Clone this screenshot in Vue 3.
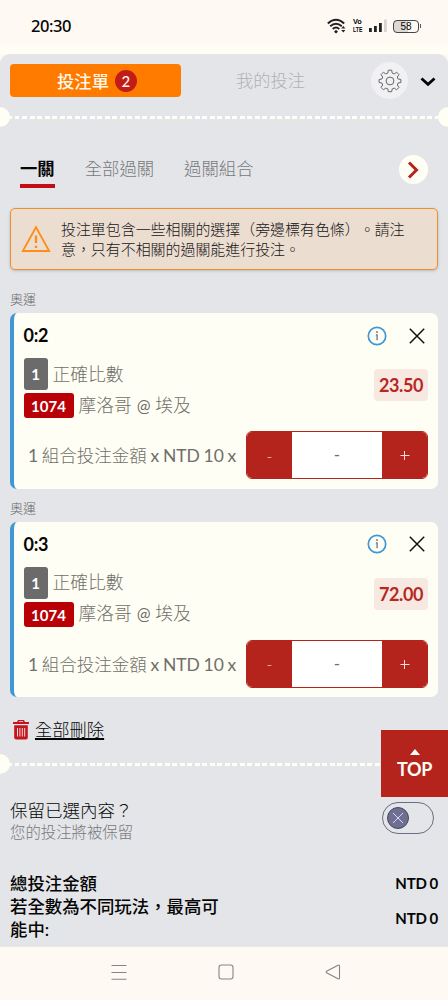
<script setup>
import { ref } from 'vue'

const bets = ref([
  { id: 1, score: '0:2', odds: '23.50' },
  { id: 2, score: '0:3', odds: '72.00' },
])
</script>

<template>
  <div class="screen" lang="zh-Hant">
    <header class="status">
      <span class="clock">20:30</span>
      <div class="status-icons">
        <svg class="wifi" width="20" height="16" viewBox="0 0 20 16" fill="none" stroke="#222" stroke-width="1.9">
          <path d="M.8 5.5Q9 -2 17.2 5.5M3.2 8.3Q9 3 14.8 8.3M5.7 11Q9 8 12.3 11" />
          <path d="M9 11.7L11 13.7 9 15.5 7 13.7ZM16.3 8L18.4 10.6H14.2ZM16.3 14.4L18.4 12H14.2Z" fill="#222" stroke="none" />
        </svg>
        <span class="volte"><b>Vo</b><b>LTE</b></span>
        <svg class="signal" width="18" height="14" viewBox="0 0 18 14">
          <path d="M0 9h2.8v4H0zM5 7h2.8v6H5zM10 4h2.8v9H10z" fill="#222" />
          <path d="M15 .5h2.8V13H15z" fill="#d8d5d0" />
        </svg>
        <span class="battery">58</span>
      </div>
    </header>

    <main class="sheet">
      <div class="top-tabs">
        <button class="slip">投注單<span class="count">2</span></button>
        <span class="mine">我的投注</span>
        <span class="gear">
          <svg width="24" height="24" viewBox="0 0 24 24" fill="none" stroke="#666" stroke-width="1" stroke-linejoin="round">
            <path d="M10.3 1.2h3.4l.5 2.9 2 .8 2.4-1.7 2.4 2.4-1.7 2.4.8 2 2.800.5v3l-2.800.5-.8 2 1.700 2.400-2.400 2.400-2.400-1.700-2 .8-.5 2.800h-3.400l-.5-2.800-2-.8-2.400 1.700L3 18.400l1.700-2.400-.8-2-2.800-.5v-3l2.800-.5.8-2L3 5.600l2.400-2.400 2.400 1.700 2-.8z" />
            <circle cx="12" cy="12" r="3.9" />
          </svg>
        </span>
        <svg class="chev" width="16" height="10" viewBox="0 0 16 10" fill="none" stroke="#050505" stroke-width="2.8"><path d="M1.5 1.500L8 7.300L14.500 1.500" /></svg>
      </div>

      <div class="tear"><i></i></div>

      <nav class="modes">
        <span class="mode active">一關</span>
        <span class="mode">全部過關</span>
        <span class="mode">過關組合</span>
        <span class="next">
          <svg width="12" height="18" viewBox="0 0 12 18" fill="none" stroke="#b5241c" stroke-width="3"><path d="M2 1.500L9.500 9L2 16.500" /></svg>
        </span>
      </nav>

      <section class="alert">
        <svg width="30" height="28" viewBox="0 0 30 28" fill="none" stroke="#ff8c16" stroke-width="1.8">
          <path d="M15 2.200L28.200 26H1.800Z" />
          <path d="M15 10.500v7.500M15 20.800v2.300" stroke-width="2.300" />
        </svg>
        <p>投注單包含一些相關的選擇（旁邊標有色條）。請注<br>意，只有不相關的過關能進行投注。</p>
      </section>

      <template v-for="bet in bets" :key="bet.id">
        <div class="league">奧運</div>
        <article class="card">
          <div class="card-head">
            <strong>{{ bet.score }}</strong>
            <svg class="info" width="20" height="20" viewBox="0 0 20 20" fill="none" stroke="#3e98d6" stroke-width="1.700">
              <circle cx="10" cy="10" r="8.700" />
              <path d="M8.900 8.800h1.200v5.500" stroke="#58779a" stroke-width="1.300" />
              <circle cx="10" cy="6" r=".9" fill="#58779a" stroke="none" />
            </svg>
            <svg class="close" width="16" height="16" viewBox="0 0 16 16" stroke="#111" stroke-width="1.500"><path d="M.8.8l14.400 14.400M15.200.8L.8 15.200" /></svg>
          </div>
          <div class="details">
            <div class="lines">
              <div class="line market"><span class="tag gray">1</span><span class="name">正確比數</span></div>
              <div class="line"><span class="tag red">1074</span><span class="name">摩洛哥 <em>@</em> 埃及</span></div>
            </div>
            <span class="odds">{{ bet.odds }}</span>
          </div>
          <div class="stake">
            <span class="stake-label">1 <span>組合投注金額</span> x NTD 10 x</span>
            <div class="stepper">
              <button>-</button>
              <span class="amount">-</span>
              <button><svg width="10" height="10" viewBox="0 0 10 10" stroke="#f7ded9" stroke-width="1"><path d="M.5 5.500h9M4.500 1v9" /></svg></button>
            </div>
          </div>
        </article>
      </template>

      <div class="remove">
        <svg width="16" height="20" viewBox="0 0 16 20">
          <path d="M5 0h6l1 2h4v2H0V2h4zM6 1.300L5.600 2h4.800L10 1.300zM1.200 5.300h13.600v12.200q0 2-2 2H3.200q-2 0-2-2z" fill="#c3151b" fill-rule="evenodd" />
          <path d="M4.500 8v8.500M6.900 8v8.500M9.300 8v8.500M11.700 8v8.500" stroke="#f2d9d8" stroke-width="1" />
        </svg>
        <a>全部刪除</a>
      </div>

      <div class="tear second"><i></i></div>

      <section class="keep">
        <div>
          <p class="keep-title">保留已選內容？</p>
          <p class="keep-note">您的投注將被保留</p>
        </div>
        <span class="toggle"><span class="knob">
          <svg width="12" height="12" viewBox="0 0 12 12" stroke="#d9d9ee" stroke-width="1"><path d="M1 1l10 10M11 1L1 11" /></svg>
        </span></span>
      </section>

      <section class="totals">
        <div class="total"><span>總投注金額</span><b>NTD 0</b></div>
        <div class="total"><span>若全數為不同玩法，最高可<br>能中:</span><b>NTD 0</b></div>
      </section>
    </main>

    <footer class="nav">
      <svg width="16" height="16" viewBox="0 0 16 16" stroke="#858585" stroke-width="1.100"><path d="M.5 1.500h15M.5 8.500h15M.5 15.200h15" /></svg>
      <svg width="16" height="16" viewBox="0 0 16 16" fill="none" stroke="#858585" stroke-width="1.100"><rect x="1" y="1" width="14" height="14" rx="2.500" /></svg>
      <svg width="16" height="16" viewBox="0 0 16 16" fill="none" stroke="#858585" stroke-width="1.100" stroke-linejoin="round"><path d="M1.500 7.200Q.8 8 1.500 8.800L13 14.800Q14.500 15.300 14.500 13.800V2.200Q14.500 .7 13 1.200Z" /></svg>
    </footer>

    <button class="top-link"><i></i>TOP</button>
  </div>
</template>

<style>
body { background: #fef9f2; }
</style>

<style scoped>
* { box-sizing: border-box; }
p { margin: 0; }
button { border: 0; padding: 0; font: inherit; letter-spacing: inherit; }
svg { display: block; flex: none; }
.screen {
  position: relative; width: 448px; height: 1000px; overflow: hidden;
  display: flex; flex-direction: column; background: #fef9f2; color: #050505;
  font-family: Lato, "Noto Sans CJK TC", sans-serif; font-weight: 300;
  text-spacing-trim: space-all;
}
.status { height: 54px; flex: none; display: flex; justify-content: space-between; padding: 0 27px 0 31px; background: linear-gradient(#fef9f2 42px, #fffdf4 44px); }
.clock { font: 500 16.500px/52px "Noto Sans", sans-serif; letter-spacing: -.45px; }
.status-icons { display: flex; height: 51px; align-items: center; }
.volte { display: flex; flex-direction: column; margin: 0 0 0 6px; width: 10px; font: 700 7px/8px "Liberation Sans", sans-serif; }
.volte b { transform: scaleX(.74); transform-origin: left; }
.volte b:first-child { transform: scaleX(1.05); }
.signal { margin-left: 6px; }
.battery { position: relative; width: 26px; height: 13px; margin: 1px 2px 0 6px; border: 1.500px solid #444; border-radius: 4px; background: linear-gradient(90deg, #dcd9d4 58%, #fef9f2 58%); font: 400 10px/12px "Liberation Sans", sans-serif; text-align: center; }
.battery::after { content: ""; position: absolute; right: -3px; top: 3px; width: 1.500px; height: 4px; background: #555; }

.sheet { height: 892px; flex: none; background: #e4e5e8; clip-path: inset(0 0 -1px 0 round 10px 10px 0 0); box-shadow: 0 1px 0 #efe6da; }
.top-tabs { height: 53px; padding: 10px 11px 0 10px; display: flex; align-items: flex-start; }
.slip { width: 171px; height: 33px; border-radius: 4px; background: #ff7b00; color: #fff8e9; display: flex; justify-content: center; align-items: center; gap: 6px; padding-left: 3px; font-weight: 500; font-size: 17.300px; }
.count { width: 22px; height: 22px; border-radius: 50%; background: #c11c18; font-size: 15px; line-height: 22px; font-weight: 500; }
.mine { margin-left: 55px; width: 74px; font-size: 17.300px; line-height: 34px; color: #b0b1b3; }
.gear { width: 37px; height: 37px; margin: -2px 0 0 61px; border-radius: 50%; background: #f1f1f4; display: flex; align-items: center; justify-content: center; }
.chev { margin: 13px 0 0 12px; }

.tear { height: 20px; display: flex; align-items: center; justify-content: space-between; overflow: hidden; }
.tear::before, .tear::after { content: ""; width: 20px; height: 20px; border-radius: 50%; background: #fffef4; flex: none; margin-left: -10px; }
.tear::after { margin: 0 -10px 0 0; }
.tear i { flex: 1; height: 3px; margin-top: 1px; background: repeating-linear-gradient(90deg, #fffef6 0 2px, transparent 2px 4.500px, #fffef6 4.500px 7.500px); }

.modes { margin-top: 27px; height: 50px; display: flex; padding: 0 20px; font-size: 17.350px; }
.mode { height: 34px; line-height: 29px; color: #77797c; margin-right: 30px; white-space: nowrap; }
.mode.active { color: #050505; font-weight: 700; border-bottom: 4px solid #c50d18; }
.next { width: 29px; height: 29px; margin: 1px .5px 0 auto; border-radius: 50%; background: #fffef5; display: flex; align-items: center; justify-content: center; }

.alert { margin: 4px 10px 0; height: 62px; border: 1.500px solid #f28d2f; border-radius: 5px; background: #ecddd1; box-shadow: 0 1px 3px #bbb; display: flex; align-items: center; padding-left: 10px; gap: 10px; color: #161616; }
.alert p { font-size: 14.950px; line-height: 20px; white-space: nowrap; }

.league { height: 27px; margin: 0 10px; font-size: 13px; line-height: 27px; color: #66676a; }
.alert + .league { height: 43px; line-height: 59px; }
.card + .league { height: 32.500px; line-height: 38px; }
.card { height: 176px; margin: 0 10px; border-left: 4px solid #3e98d6; border-radius: 7px; background: #fffef5; padding: 0 10px 0 9.500px; }
.card + .league + .card { height: 175.500px; }
.card-head { height: 45px; display: flex; align-items: center; }
.card-head strong { flex: 1; font-size: 18px; line-height: 45px; font-weight: 700; letter-spacing: -.3px; }
.info { margin-right: 22px; }
.close { margin-right: 3px; }
.details { display: flex; justify-content: space-between; height: 73px; }
.lines { display: flex; flex-direction: column; gap: 3px; }
.line { height: 25px; display: flex; gap: 5px; align-items: center; }
.line.market { height: 32px; }
.tag { display: block; height: 25px; border-radius: 3px; color: #fff; font-size: 15px; font-weight: 700; line-height: 26px; text-align: center; }
.gray { width: 24px; height: 32px; line-height: 33px; background: #6b6b6b; }
.red { width: 50px; background: #b80006; }
.name { font-size: 17.800px; line-height: 25px; color: #706f6a; }
.name em { font-style: normal; font-weight: 400; font-size: 16.500px; }
.odds { width: 54px; height: 32px; margin-top: 11px; border-radius: 4px; background: #f8e8e2; color: #b5281f; font-size: 18px; line-height: 33px; font-weight: 700; text-align: center; letter-spacing: -.4px; }
.stake { height: 48px; display: flex; align-items: center; justify-content: space-between; padding-left: 4.500px; color: #706f6a; }
.stake-label { font-size: 17.500px; line-height: 46px; padding-top: 2px; font-weight: 400; white-space: nowrap; word-spacing: -.8px; }
.stake-label span { font-weight: 300; }
.stepper { display: flex; width: 182px; height: 48px; border: 1px solid #b5241c; border-radius: 6px; background: #fff; overflow: hidden; }
.stepper button { width: 45px; background: #b5241c; color: #f7ded9; display: flex; align-items: center; justify-content: center; font-size: 16px; }
.amount { flex: 1; text-align: center; line-height: 46px; font-size: 17px; font-weight: 400; }

.remove { height: 57px; display: flex; align-items: center; padding: 8px 0 0 13px; gap: 6px; font-size: 17.300px; }
.remove a { text-decoration: underline; text-decoration-thickness: 1.500px; text-underline-offset: 2px; line-height: 24px; }
.keep { display: flex; justify-content: space-between; padding: 26px 14px 0 10px; height: 98px; }
.keep-title { font-size: 17.500px; line-height: 21px; }
.keep-note { font-size: 15.400px; line-height: 22px; color: #77797c; }
.toggle { width: 52px; height: 32px; margin-top: 1.500px; border: 1.500px solid #6c6c82; border-radius: 16px; padding: 4px; }
.knob { width: 22px; height: 22px; border-radius: 50%; border: 1.500px solid #46465f; background: #6f6f93; display: flex; align-items: center; justify-content: center; }
.total { display: flex; justify-content: space-between; align-items: center; padding: 0 10px; font-size: 17.400px; line-height: 23px; font-weight: 500; }
.total b { font-size: 15px; font-weight: 700; letter-spacing: -.1px; word-spacing: -1px; }

.nav { height: 54px; display: flex; justify-content: center; gap: 91px; padding: 18px 0 0 4px; }
.top-link { position: absolute; left: 381px; top: 730px; width: 67px; height: 67px; background: #b5241c; color: #fffef5; display: flex; flex-direction: column; align-items: center; font-size: 18px; font-weight: 700; line-height: 28px; letter-spacing: -.4px; }
.top-link i { margin-top: 19px; border: 5px solid transparent; border-top: 0; border-bottom: 6px solid #fffef5; }
</style>
